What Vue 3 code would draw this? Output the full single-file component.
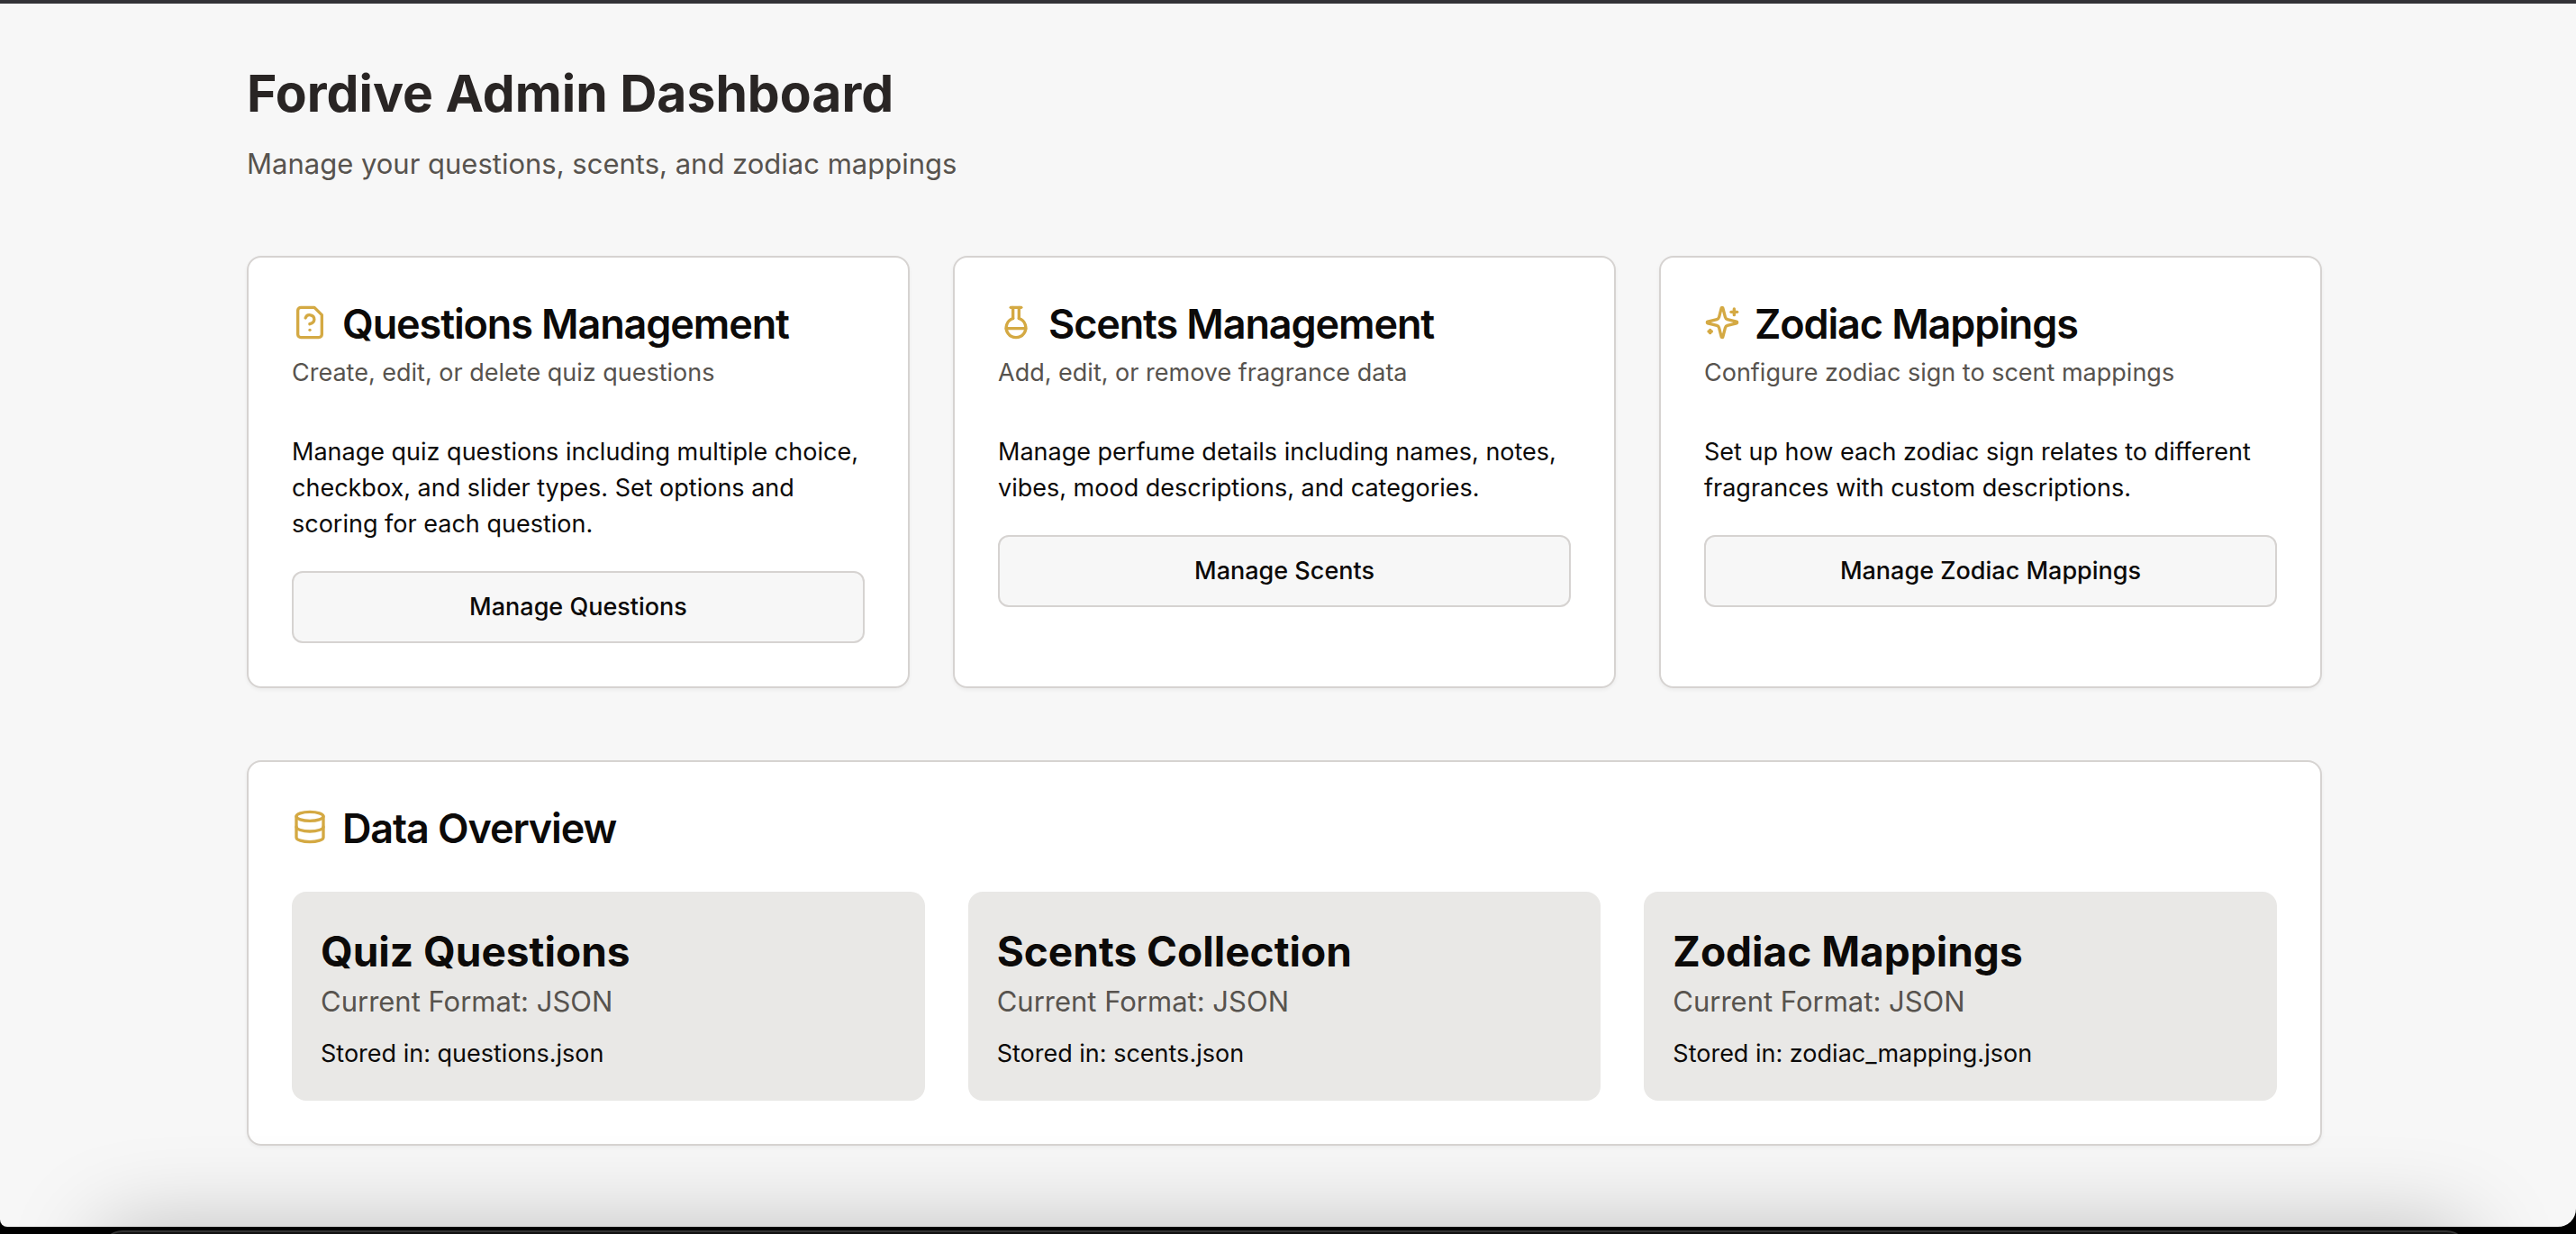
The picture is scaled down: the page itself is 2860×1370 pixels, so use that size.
<script setup>
const icons = {
  question: [
    'M12 17h.01',
    'M15 2H6a2 2 0 0 0-2 2v16a2 2 0 0 0 2 2h12a2 2 0 0 0 2-2V7Z',
    'M9.1 9a3 3 0 0 1 5.82 1c0 2-3 3-3 3',
  ],
  flask: ['M10 2v7.31', 'M14 9.3V1.99', 'M8.5 2h7', 'M14 9.3a6.5 6.5 0 1 1-4 0', 'M5.52 16h12.96'],
  sparkles: [
    'M9.937 15.5A2 2 0 0 0 8.5 14.063l-6.135-1.582a.5.5 0 0 1 0-.962L8.5 9.936A2 2 0 0 0 9.937 8.5l1.582-6.135a.5.5 0 0 1 .963 0L14.063 8.5A2 2 0 0 0 15.5 9.937l6.135 1.581a.5.5 0 0 1 0 .964L15.5 14.063a2 2 0 0 0-1.437 1.437l-1.582 6.135a.5.5 0 0 1-.963 0z',
    'M20 3v4',
    'M22 5h-4',
    'M4 17v2',
    'M5 18H3',
  ],
}

const sections = [
  {
    title: 'Questions Management',
    icon: icons.question,
    description: 'Create, edit, or delete quiz questions',
    body: 'Manage quiz questions including multiple choice, checkbox, and slider types. Set options and scoring for each question.',
    action: 'Manage Questions',
  },
  {
    title: 'Scents Management',
    icon: icons.flask,
    description: 'Add, edit, or remove fragrance data',
    body: 'Manage perfume details including names, notes, vibes, mood descriptions, and categories.',
    action: 'Manage Scents',
  },
  {
    title: 'Zodiac Mappings',
    icon: icons.sparkles,
    description: 'Configure zodiac sign to scent mappings',
    body: 'Set up how each zodiac sign relates to different fragrances with custom descriptions.',
    action: 'Manage Zodiac Mappings',
  },
]

const sources = [
  { title: 'Quiz Questions', file: 'questions.json' },
  { title: 'Scents Collection', file: 'scents.json' },
  { title: 'Zodiac Mappings', file: 'zodiac_mapping.json' },
]
</script>

<template>
  <div class="window">
    <div class="page">
      <main class="container">
        <header class="page-header">
          <h1>Fordive Admin Dashboard</h1>
          <p>Manage your questions, scents, and zodiac mappings</p>
        </header>

        <div class="grid">
          <section v-for="section in sections" :key="section.title" class="card">
            <div class="card-heading">
              <svg class="icon" viewBox="0 0 24 24" aria-hidden="true">
                <path v-for="d in section.icon" :key="d" :d="d" />
              </svg>
              <h2>{{ section.title }}</h2>
            </div>
            <p class="card-description">{{ section.description }}</p>
            <p class="card-body">{{ section.body }}</p>
            <button type="button" class="action">{{ section.action }}</button>
          </section>
        </div>

        <section class="card overview">
          <div class="card-heading">
            <svg class="icon" viewBox="0 0 24 24" aria-hidden="true">
              <ellipse cx="12" cy="5" rx="9" ry="3" />
              <path d="M3 5V19A9 3 0 0 0 21 19V5" />
              <path d="M3 12A9 3 0 0 0 21 12" />
            </svg>
            <h2>Data Overview</h2>
          </div>
          <div class="grid sources">
            <article v-for="source in sources" :key="source.title" class="source">
              <h3>{{ source.title }}</h3>
              <p class="format">Current Format: JSON</p>
              <p class="file">Stored in: {{ source.file }}</p>
            </article>
          </div>
        </section>
      </main>
    </div>
    <div class="dock"></div>
  </div>
</template>

<style>
body {
  background: #000;
}
</style>

<style scoped>
.window {
  position: relative;
  display: flex;
  flex-direction: column;
  min-height: 100vh;
  padding-bottom: 8px;
  box-sizing: border-box;
  overflow: hidden;
  font-family: Inter, "Liberation Sans", sans-serif;
  color: #0c0a09;
}

h1,
h2,
h3,
p {
  margin: 0;
}

.page {
  flex: 1;
  padding-right: 8px;
  background: #f7f7f7;
  border-top: 4px solid #333237;
  border-radius: 0 0 20px 8px;
}

.container {
  box-sizing: border-box;
  max-width: 2400px;
  margin: 0 auto;
  padding: 64px 48px;
}

.page-header {
  margin-bottom: 78px;
}

.page-header h1 {
  font-size: 57px;
  line-height: 72px;
  font-weight: 700;
  color: #292524;
}

.page-header p {
  margin-top: 18px;
  font-size: 31px;
  line-height: 48px;
  color: #57534e;
}

.grid {
  display: grid;
  grid-template-columns: repeat(3, minmax(0, 1fr));
  gap: 48px;
}

.card {
  padding: 48px;
  background: #fff;
  border: 2px solid #d6d3d1;
  border-radius: 16px;
  box-shadow: 0 2px 4px rgba(0, 0, 0, 0.05);
}

.card-heading {
  display: flex;
  align-items: center;
  gap: 16px;
}

.card-heading h2 {
  padding-top: 4px;
  font-size: 45px;
  line-height: 44px;
  font-weight: 600;
  letter-spacing: -0.025em;
}

.icon {
  flex: none;
  width: 40px;
  height: 40px;
  fill: none;
  stroke: #d4a943;
  stroke-width: 2;
  stroke-linecap: round;
  stroke-linejoin: round;
}

.card-description {
  margin-top: 12px;
  font-size: 27px;
  line-height: 40px;
  color: #57534e;
}

.card-body {
  margin-top: 48px;
  font-size: 27px;
  line-height: 40px;
}

.action {
  display: block;
  box-sizing: border-box;
  width: 100%;
  height: 80px;
  margin-top: 32px;
  padding: 0 32px;
  font: 500 27px/40px Inter, "Liberation Sans", sans-serif;
  color: inherit;
  background: #f7f7f7;
  border: 2px solid #d6d3d1;
  border-radius: 12px;
  cursor: pointer;
}

.overview {
  margin-top: 80px;
}

.sources {
  margin-top: 48px;
}

.source {
  padding: 34px 32px 32px;
  background: #e9e8e6;
  border-radius: 16px;
}

.source h3 {
  font-size: 46px;
  line-height: 64px;
  font-weight: 700;
}

.format {
  font-size: 31px;
  line-height: 48px;
  color: #57534e;
}

.file {
  margin-top: 14px;
  font-size: 27px;
  line-height: 40px;
}

/* Upper edge of the panel that lies below the page and shades it */
.dock {
  position: absolute;
  right: 120px;
  bottom: -96px;
  left: 112px;
  height: 100px;
  box-sizing: border-box;
  background: #111;
  border-top: 2px solid #333;
  border-radius: 24px;
  box-shadow: 0 0 100px rgba(0, 0, 0, 0.25);
  pointer-events: none;
}
</style>
